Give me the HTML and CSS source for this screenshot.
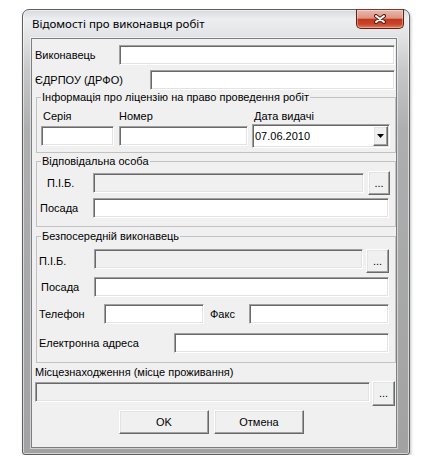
FILE: index.html
```html
<!DOCTYPE html>
<html lang="uk">
<head>
  <meta charset="UTF-8" />
  <meta name="viewport" content="width=device-width, initial-scale=1.0"/>
  <title>Відомості про виконавця робіт</title>
  <link rel="stylesheet" href="styles.css">
</head>
<body>
  <div class="window">
    <div class="titlebar">
      <span class="caption">Відомості про виконавця робіт</span>
      <button class="close" type="button">
        <svg width="12" height="10" viewBox="0 0 12 10">
          <path d="M2 2 L10 8 M10 2 L2 8" stroke="#4b2019" stroke-width="4" stroke-linecap="round"/>
          <path d="M2 2 L10 8 M10 2 L2 8" stroke="#fff" stroke-width="2" stroke-linecap="round"/>
        </svg>
      </button>
    </div>

    <div class="client">
      <!-- Performer -->
      <div class="row row-exec">
        <label class="lbl l-exec">Виконавець</label>
        <input class="edit f-exec" type="text">
      </div>
      <div class="row row-code">
        <label class="lbl l-code">ЄДРПОУ (ДРФО)</label>
        <input class="edit f-code" type="text">
      </div>

      <!-- Licence -->
      <fieldset class="group group-lic">
        <legend>Інформація про ліцензію на право проведення робіт</legend>
        <div class="lic-grid">
          <span class="lbl cap-series">Серія</span>
          <span class="lbl cap-number">Номер</span>
          <span class="lbl cap-date">Дата видачі</span>
          <input class="edit f-series" type="text">
          <input class="edit f-number" type="text">
          <div class="combo">
            <span class="combo-text">07.06.2010</span>
            <span class="combo-btn">
              <svg width="7" height="4" viewBox="0 0 7 4"><polygon points="0,0 7,0 3.5,4" fill="#000"/></svg>
            </span>
          </div>
        </div>
      </fieldset>

      <!-- Responsible person -->
      <fieldset class="group group-resp">
        <legend>Відповідальна особа</legend>
        <div class="row g-row-pib">
          <label class="lbl l-pib2">П.І.Б.</label>
          <input class="edit f-pib2" type="text" disabled>
          <button class="btn b-pib2" type="button">...</button>
        </div>
        <div class="row g-row-pos">
          <label class="lbl l-pos2">Посада</label>
          <input class="edit f-pos2" type="text">
        </div>
      </fieldset>

      <!-- Direct performer -->
      <fieldset class="group group-direct">
        <legend>Безпосередній виконавець</legend>
        <div class="row d-row-pib">
          <label class="lbl l-pib3">П.І.Б.</label>
          <input class="edit f-pib3" type="text" disabled>
          <button class="btn b-pib3" type="button">...</button>
        </div>
        <div class="row d-row-pos">
          <label class="lbl l-pos3">Посада</label>
          <input class="edit f-pos3" type="text">
        </div>
        <div class="row d-row-phone">
          <label class="lbl l-phone">Телефон</label>
          <input class="edit f-phone" type="text">
          <label class="lbl l-fax">Факс</label>
          <input class="edit f-fax" type="text">
        </div>
        <div class="row d-row-mail">
          <label class="lbl l-mail">Електронна адреса</label>
          <input class="edit f-mail" type="text">
        </div>
      </fieldset>

      <!-- Location -->
      <div class="lbl loc-caption">Місцезнаходження (місце проживання)</div>
      <div class="row loc-row">
        <input class="edit f-loc" type="text" disabled>
        <button class="btn b-loc" type="button">...</button>
      </div>

      <div class="actions">
        <button class="btn btn-action" type="button">OK</button>
        <button class="btn btn-action" type="button">Отмена</button>
      </div>
    </div>
  </div>
</body>
</html>
```

FILE: styles.css
```css
* {
  box-sizing: border-box;
}
body {
  margin: 0;
  background: #fff;
  font-family: "Liberation Sans", Arial, sans-serif;
  font-size: 11px;
  color: #000;
}

/* window frame */
.window {
  width: 388px;
  height: 446px;
  margin: 9px 0 0 22px;
  padding: 0 12px 6px 8px;
  border: 1px solid #5b5f63;
  border-radius: 7px 7px 3px 3px;
  background: linear-gradient(to bottom, #d6d9dc 0, #eceef0 9px, #e1e3e5 26px, #c6c8ca 60px, #adaeaf 120px, #a2a2a2 100%);
  box-shadow: 1px 2px 3px rgba(0, 0, 0, 0.25), inset 0 0 0 1px rgba(255, 255, 255, 0.55);
  display: flex;
  flex-direction: column;
}
.titlebar {
  height: 28px;
  margin-right: -7px;
  display: flex;
  align-items: flex-start;
}
.caption {
  font-family: "Noto Sans", sans-serif;
  font-size: 11.5px;
  line-height: 15px;
  padding: 6px 0 0 1px;
  color: #000;
}
.close {
  margin: -1px 0 0 auto;
  width: 48px;
  height: 20px;
  padding: 0;
  border: 1px solid #5a2218;
  border-top-color: #7a3a30;
  border-radius: 0 0 5px 5px;
  background: linear-gradient(to bottom, #e9b8ad 0, #dc9585 45%, #c4391c 52%, #c9432a 78%, #e27c5c 100%);
  box-shadow: inset 0 0 0 1px rgba(255, 255, 255, 0.35);
  display: flex;
  align-items: center;
  justify-content: center;
}
.close svg {
  display: block;
}
.client {
  flex: 1;
  background: #f0f0f0;
  border: 1px solid #7c7f82;
  box-shadow: 0 0 0 1px rgba(255, 255, 255, 0.5);
}

/* generic controls */
.row {
  display: flex;
  align-items: center;
}
.lbl {
  flex: none;
  white-space: nowrap;
  line-height: 13px;
}
.edit {
  appearance: none;
  flex: none;
  height: 20px;
  margin: 0;
  padding: 0 3px;
  border: 1px solid;
  border-color: #a0a0a0 #fff #fff #a0a0a0;
  box-shadow: inset 1px 1px 0 #696969, inset -1px -1px 0 #e3e3e3;
  background: #fff;
  font: 11px "Liberation Sans", Arial, sans-serif;
  outline: none;
}
.edit:disabled {
  background: #f0f0f0;
}
.btn {
  appearance: none;
  flex: none;
  margin: 0;
  padding: 0;
  background: #f0f0f0;
  border: 1px solid;
  border-color: #fff #696969 #696969 #fff;
  box-shadow: inset -1px -1px 0 #a0a0a0, inset 1px 1px 0 #e3e3e3;
  font: 11px "Liberation Sans", Arial, sans-serif;
  line-height: 13px;
  color: #000;
}

/* top rows */
.row-exec {
  margin-top: 6px;
  height: 20px;
}
.l-exec {
  width: 87px;
  padding-left: 3px;
}
.f-exec {
  width: 276px;
}
.row-code {
  margin-top: 5px;
  height: 20px;
}
.l-code {
  width: 118px;
  padding-left: 3px;
}
.f-code {
  width: 245px;
}

/* group boxes */
.group {
  width: 360px;
  min-inline-size: 0;
  margin: 0 0 0 4px;
  padding: 0;
  border: 1px solid #c2c2c2;
}
.group legend {
  margin-left: 4px;
  padding: 0 1px;
  line-height: 13px;
  font-size: 11px;
}
.group-lic {
  margin-top: 1px;
}
.group-resp {
  margin-top: 2px;
  padding-bottom: 8px;
}
.group-direct {
  margin-top: 3px;
  padding-bottom: 9px;
}

/* licence */
.lic-grid {
  display: grid;
  grid-template-columns: 78px 133px 138px;
  grid-template-rows: 13px 24px;
  row-gap: 1px;
  align-items: center;
  margin: 6px 0 4px 4px;
}
.cap-series,
.cap-date {
  padding-left: 2px;
}
.f-series {
  width: 73px;
}
.f-number {
  width: 129px;
}
.combo {
  width: 138px;
  height: 24px;
  display: flex;
  align-items: center;
  border: 1px solid;
  border-color: #a0a0a0 #fff #fff #a0a0a0;
  box-shadow: inset 1px 1px 0 #696969, inset -1px -1px 0 #e3e3e3;
  background: #fff;
  padding: 1px;
}
.combo-text {
  flex: 1;
  padding-left: 1px;
  line-height: 13px;
}
.combo-btn {
  width: 15px;
  height: 20px;
  background: #f0f0f0;
  border: 1px solid;
  border-color: #fff #696969 #696969 #fff;
  box-shadow: inset -1px -1px 0 #a0a0a0, inset 1px 1px 0 #e3e3e3;
  display: flex;
  align-items: center;
  justify-content: center;
}
.combo-btn svg {
  display: block;
}

/* responsible person */
.g-row-pib {
  margin-top: 3px;
  height: 24px;
}
.l-pib2 {
  width: 56px;
  padding-left: 10px;
}
.f-pib2 {
  width: 271px;
}
.b-pib2 {
  width: 22px;
  height: 24px;
  margin-left: 4px;
}
.g-row-pos {
  margin-top: 3px;
  height: 20px;
}
.l-pos2 {
  width: 56px;
  padding-left: 3px;
}
.f-pos2 {
  width: 296px;
}

/* direct performer */
.d-row-pib {
  margin-top: 6px;
  height: 24px;
}
.d-row-pib .edit {
  align-self: flex-start;
}
.l-pib3 {
  width: 57px;
  padding-left: 2px;
}
.f-pib3 {
  width: 269px;
}
.b-pib3 {
  width: 23px;
  height: 24px;
  margin-left: 3px;
}
.d-row-pos {
  margin-top: 4px;
  height: 20px;
}
.l-pos3 {
  width: 57px;
  padding-left: 4px;
}
.f-pos3 {
  width: 295px;
}
.d-row-phone {
  margin-top: 7px;
  height: 20px;
}
.l-phone {
  width: 67px;
  padding-left: 2px;
}
.f-phone {
  width: 100px;
}
.l-fax {
  width: 45px;
  padding-left: 6px;
}
.f-fax {
  width: 140px;
}
.d-row-mail {
  margin-top: 9px;
  height: 20px;
}
.l-mail {
  width: 137px;
  padding-left: 2px;
}
.f-mail {
  width: 215px;
}

/* location */
.loc-caption {
  margin-top: 3px;
  padding-left: 3px;
}
.loc-row {
  margin: 2px 0 0 3px;
  height: 25px;
}
.f-loc {
  width: 335px;
  align-self: flex-start;
  margin-top: 1px;
}
.b-loc {
  width: 23px;
  height: 25px;
  margin-left: 2px;
}

/* dialog buttons */
.actions {
  display: flex;
  gap: 5px;
  margin-top: 4px;
  padding-left: 87px;
}
.btn-action {
  width: 90px;
  height: 24px;
}
```
